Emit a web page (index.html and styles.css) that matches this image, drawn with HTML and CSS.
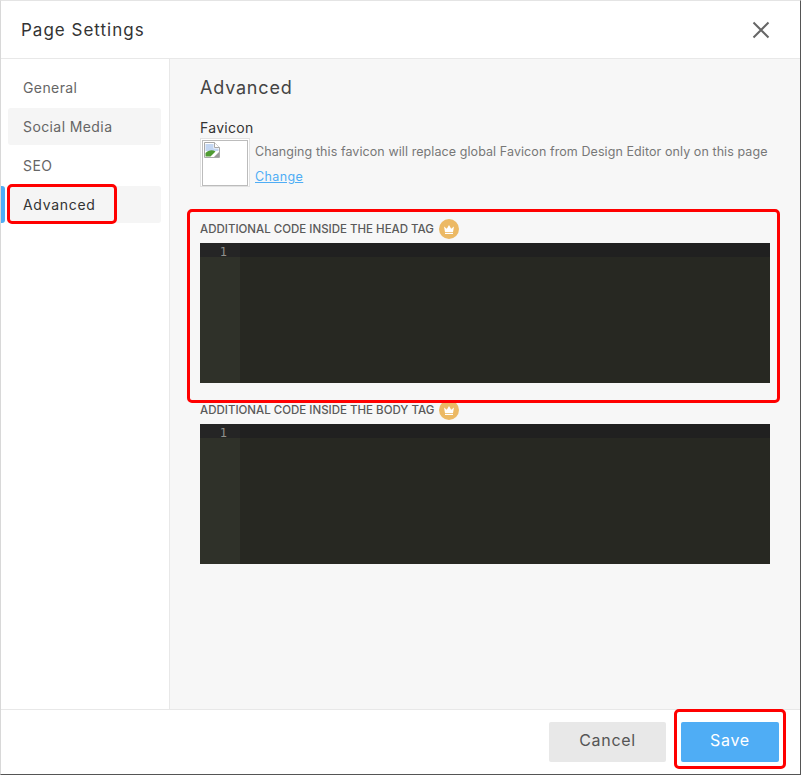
FILE: index.html
```html
<!DOCTYPE html>
<html lang="en">
<head>
<meta charset="utf-8">
<title>Page Settings</title>
<link rel="stylesheet" href="styles.css">
</head>
<body>
<div class="dialog">
  <header class="head">
    <h1 class="title">Page Settings</h1>
    <svg class="close" width="18" height="18" viewBox="0 0 18 18" aria-label="Close"><path d="M1.500 1.500 16.500 16.500M16.500 1.500 1.500 16.500" stroke="#666" stroke-width="2" fill="none"/></svg>
  </header>
  <div class="body">
    <nav class="side">
      <a class="item">General</a>
      <a class="item shaded">Social Media</a>
      <a class="item">SEO</a>
      <a class="item shaded active">Advanced</a>
    </nav>
    <main class="content">
      <h2 class="section">Advanced</h2>
      <div class="fav-label">Favicon</div>
      <div class="fav-row">
        <div class="thumb">
          <div class="thumb-inner">
            <svg class="broken" width="16" height="16" viewBox="0 0 16 16"><path d="M.5.500h10l5 5v10H.500z" fill="#fff" stroke="#a8a8a8"/><path d="M1.500 2h8v4.500h5V9H1.500z" fill="#c3d6f2"/><path d="M1.500 14.500V11c3-3 7-3.500 10-1.500l-5 5z" fill="#4f9b32"/><path d="M10.500.500v5h5" fill="#fff" stroke="#a8a8a8"/><path d="M10 15l5-5v5z" fill="#9a9a9a"/></svg>
          </div>
        </div>
        <div class="fav-text">
          <p class="fav-note">Changing this favicon will replace global Favicon from Design Editor only on this page</p>
          <a class="fav-link">Change</a>
        </div>
      </div>
      <div class="code-label code-label-head">ADDITIONAL CODE INSIDE THE HEAD TAG
        <svg class="crown" width="20" height="20" viewBox="0 0 20 20"><circle cx="10" cy="10" r="10" fill="#ecb964"/><path d="M5 7.500l2.800 2.200L10 6l2.200 3.700L15 7.500l-1 5.500H6z" fill="#fff"/><path d="M6 13.800h8v1.200H6z" fill="#fff"/></svg>
      </div>
      <div class="editor"><div class="gutter"><span class="gutter-line">1</span></div><div class="lines"><div class="active-line"></div></div></div>
      <div class="code-label code-label-body">ADDITIONAL CODE INSIDE THE BODY TAG
        <svg class="crown" width="20" height="20" viewBox="0 0 20 20"><circle cx="10" cy="10" r="10" fill="#ecb964"/><path d="M5 7.500l2.800 2.200L10 6l2.200 3.700L15 7.500l-1 5.500H6z" fill="#fff"/><path d="M6 13.800h8v1.200H6z" fill="#fff"/></svg>
      </div>
      <div class="editor"><div class="gutter"><span class="gutter-line">1</span></div><div class="lines"><div class="active-line"></div></div></div>
    </main>
  </div>
  <footer class="foot">
    <button class="btn cancel">Cancel</button>
    <button class="btn save">Save</button>
  </footer>
  <div class="mark mark-adv"></div>
  <div class="mark mark-head"></div>
  <div class="mark mark-save"></div>
</div>
</body>
</html>
```
FILE: styles.css
```css
* { box-sizing: border-box; }
html, body { margin: 0; padding: 0; background: #fff; }
body { width: 802px; height: 775px; overflow: hidden; font-family: Inter, "Open Sans", sans-serif; }
.dialog { position: relative; width: 801px; height: 775px; display: flex; flex-direction: column; background: #fff; border-top: 1px solid #e4e4e4; border-left: 1px solid #d8d8d8; border-right: 1px solid #555; border-bottom: 1px solid #555; }
.head { height: 58px; flex: none; display: flex; align-items: center; justify-content: space-between; padding: 0 30px 0 20px; border-bottom: 1px solid #e8e8e8; }
.title { margin: 0; font-size: 17px; font-weight: 400; color: #333; letter-spacing: 1px; }
.close { display: block; }
.body { flex: 1; display: flex; min-height: 0; }
.side { width: 169px; flex: none; background: #fff; border-right: 1px solid #e8e8e8; padding: 10px 8px 0 7px; display: flex; flex-direction: column; gap: 2px; }
.item { height: 37px; display: flex; align-items: center; padding: 0 0 1px 15px; font-size: 14px; color: #666; border-radius: 3px; position: relative; letter-spacing: .4px; }
.shaded { background: #f5f5f5; }
.active { color: #333; letter-spacing: .7px; }
.active::before { content: ""; position: absolute; left: -7px; top: 0; bottom: 0; width: 4px; background: #4fadf5; border-radius: 0 3px 3px 0; }
.content { flex: 1; background: #f7f7f7; padding: 16px 30px 0 30px; }
.section { margin: 0; font-size: 18px; font-weight: 400; color: #444; line-height: 26px; letter-spacing: .8px; }
.fav-label { margin-top: 17px; font-size: 14px; line-height: 20px; color: #333; letter-spacing: .3px; }
.fav-row { display: flex; gap: 5px; }
.thumb { width: 50px; height: 49px; background: #fff; border: 1px solid #e2e2e2; padding: 1px; flex: none; }
.thumb-inner { width: 46px; height: 46px; border: 1px solid #bcbcbc; padding: 1px; }
.broken { display: block; }
.fav-text { min-width: 0; }
.fav-note { margin: 5px 0 0; font-size: 12.500px; line-height: 18px; color: #777; white-space: nowrap; letter-spacing: .08px; }
.fav-link { display: block; margin-top: 7px; font-size: 12.500px; line-height: 18px; color: #4fadf5; text-decoration: underline; letter-spacing: .4px; }
.code-label { display: flex; align-items: center; gap: 5px; height: 20px; font-size: 11.500px; font-weight: 500; color: #5a5a5a; }
.code-label-head { margin-top: 32px; }
.code-label-body { margin-top: 17px; }
.editor { display: flex; height: 140px; margin-top: 4px; background: #272822; }
.gutter { width: 40px; background: #2f3129; flex: none; }
.gutter-line { display: block; height: 14px; background: #252525; color: #8f908a; font: 12px/19px "DejaVu Sans Mono", monospace; text-align: right; padding-right: 13px; }
.lines { flex: 1; }
.active-line { height: 14px; background: #202020; }
.foot { height: 65px; flex: none; display: flex; justify-content: flex-end; align-items: flex-start; gap: 15px; padding: 12px 21px 0 0; border-top: 1px solid #e8e8e8; background: #fff; }
.btn { height: 40px; border: 0; border-radius: 2px; padding: 0 0 4px; font: 16px Inter, "Open Sans", sans-serif; letter-spacing: .7px; }
.cancel { width: 117px; background: #e8e8e8; color: #555; }
.save { width: 98px; background: #4fadf5; color: #fff; }
.mark { position: absolute; border: 3px solid #f00; border-radius: 5px; pointer-events: none; }
.mark-adv { left: 6px; top: 183px; width: 110px; height: 40px; }
.mark-head { left: 186px; top: 208px; width: 593px; height: 194px; }
.mark-save { left: 673px; top: 708px; width: 112px; height: 60px; }
```
